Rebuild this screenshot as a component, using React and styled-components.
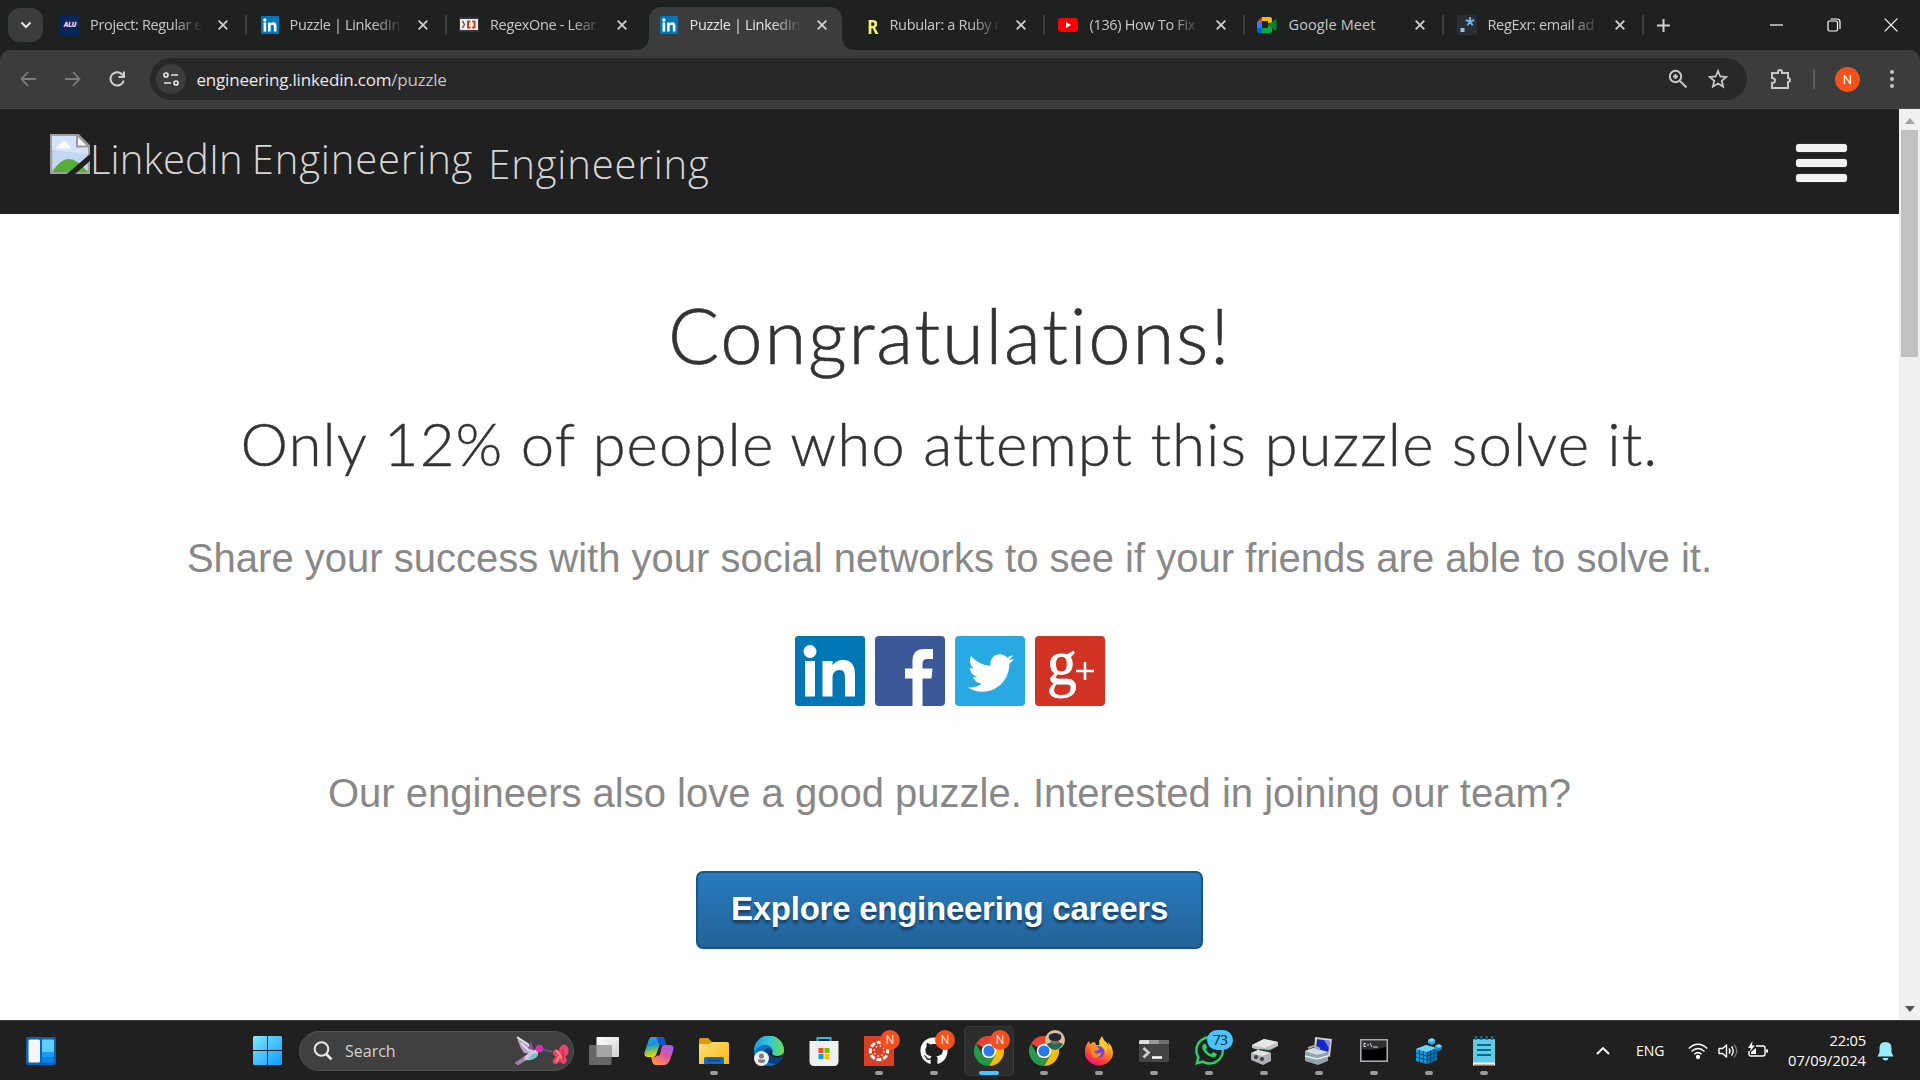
import React from "react";
import styled, { createGlobalStyle, css } from "styled-components";
import { FaTwitter, FaGithub, FaWhatsapp } from "react-icons/fa";

const ui = `"Open Sans", "Noto Sans", sans-serif`;

const Global = createGlobalStyle`
  * { box-sizing: border-box; }
  body { margin: 0; background: #fff; overflow: hidden; }
  svg { display: block; flex: none; }
`;

const Screen = styled.div`
  width: 1920px;
  height: 1080px;
  display: flex;
  flex-direction: column;
  overflow: hidden;
  font-family: ${ui};
`;

/* ---------- tab strip ---------- */
const TabStrip = styled.div`
  height: 50px;
  flex: none;
  display: flex;
  background: #1f2120;
  color: #c7c7c7;
`;
const TabSearch = styled.div`
  width: 35px;
  height: 34px;
  margin: 8px 7px 0 8px;
  border-radius: 12px;
  background: #3c3c3c;
  display: grid;
  place-items: center;
`;
const Tab = styled.div`
  position: relative;
  width: 199.5px;
  height: 43px;
  margin-top: 7px;
  padding: 0 0 7px 10px;
  display: flex;
  align-items: center;
  flex: none;
  ${(p) =>
    p.$active &&
    css`
      color: #e3e3e3;
      &::before {
        content: "";
        position: absolute;
        inset: 0 6px 0 0;
        border-radius: 12px 12px 0 0;
        background: #3c3c3c;
      }
    `}
`;
const Foot = styled.svg`
  position: absolute;
  bottom: 0;
  ${(p) => (p.$right ? "right: -8px; transform: scaleX(-1);" : "left: -14px;")}
`;
const Favicon = styled.div`
  position: relative;
  width: 20px;
  height: 20px;
  display: grid;
  place-items: center;
  margin-right: 10px;
`;
const AluMark = styled.div`
  width: 20px;
  height: 20px;
  display: grid;
  place-items: center;
  font: italic 900 7px/20px Roboto, sans-serif;
  background: #03265e;
  color: #f3d8e2;
  text-shadow: 0 -1px 0 #d7263d;
`;
const RubyMark = styled.div`
  font: 700 20px/20px "Noto Sans", sans-serif;
  transform: scaleX(0.85);
  color: #f5f07a;
  padding: 2px 0 0 9px;
`;
const TabTitle = styled.div`
  position: relative;
  width: 113px;
  font-size: 14.5px;
  line-height: 20px;
  padding-left: ${(p) => p.$indent || 0}px;
  letter-spacing: ${(p) => (p.$full ? 0.1 : -0.33)}px;
  white-space: nowrap;
  overflow: hidden;
  mask-image: ${(p) => (p.$full ? "none" : "linear-gradient(90deg, #000 74%, transparent 100%)")};
`;
const TabClose = styled.div`
  position: relative;
  width: 20px;
  margin-left: 10px;
  display: grid;
  place-items: center;
`;
const TabRule = styled.div`
  width: 2px;
  height: 20px;
  margin-left: 12px;
  background: ${(p) => (p.$hidden ? "transparent" : "#3e403f")};
`;
const NewTab = styled.div`
  width: 28px;
  margin: 7px 0 7px 3px;
  display: grid;
  place-items: center;
`;
const WindowButtons = styled.div`
  margin-left: auto;
  width: 172px;
  height: 49px;
  display: grid;
  grid-template-columns: repeat(3, 57px);
  place-items: center;
`;

/* ---------- toolbar ---------- */
const ToolbarBack = styled.div`
  height: 59px;
  flex: none;
  background: #1f2120;
`;
const Toolbar = styled.div`
  height: 59px;
  padding: 8px 21px 8px 14px;
  display: flex;
  align-items: center;
  background: #3c3c3c;
  border-radius: 10px 10px 0 0;
  border-bottom: 1px solid #494949;
`;
const NavIcon = styled.div`
  width: 28px;
  margin-right: 16.5px;
  display: grid;
  place-items: center;
`;
const Address = styled.div`
  width: 1597px;
  height: 42px;
  margin-left: 2.5px;
  padding: 0 19px 0 6px;
  border-radius: 21px;
  background: #282828;
  display: flex;
  align-items: center;
`;
const SiteInfo = styled.div`
  width: 30px;
  height: 30px;
  border-radius: 50%;
  background: #3c3c3c;
  display: grid;
  place-items: center;
`;
const Url = styled.div`
  margin: 1px auto 0 10.5px;
  font-size: 17px;
  line-height: 24px;
  letter-spacing: -0.2px;
  color: #e9e9e9;
  span { color: #c4c4c4; }
`;
const AddressIcons = styled.div`
  display: flex;
  gap: 20px;
`;
const ToolbarEnd = styled.div`
  margin-left: auto;
  display: flex;
  align-items: center;
`;
const ToolRule = styled.div`
  width: 2px;
  height: 20px;
  margin: 0 20px 0 21px;
  background: #5c5c5c;
`;
const Avatar = styled.div`
  width: 25px;
  height: 25px;
  border-radius: 50%;
  background: #f4511e;
  color: #fff;
  font: 400 13px/25px Roboto, sans-serif;
  text-align: center;
  margin-right: 25px;
`;

/* ---------- page ---------- */
const Viewport = styled.div`
  height: 911px;
  flex: none;
  display: flex;
`;
const Page = styled.main`
  width: 1899px;
  background: #fff;
`;
const SiteHeader = styled.header`
  height: 105px;
  padding: 0 52px 0 50px;
  background: #202020;
  display: flex;
  align-items: center;
  justify-content: space-between;
`;
const Brand = styled.div`
  display: flex;
  align-items: flex-start;
  padding-top: 4px;
  font: 300 40px/60px "Open Sans", sans-serif;
  letter-spacing: 0.85px;
  color: #d6d6d6;
  white-space: nowrap;
`;
const BrandAlt = styled.div`
  display: flex;
  margin-top: -5px;
  svg { margin-top: 5px; }
`;
const BrandWord = styled.span`
  margin-right: 9px;
  letter-spacing: 0.1px;
`;
const BrandName = styled.div`
  margin-left: 15px;
`;
const Burger = styled.div`
  width: 51px;
  margin-top: 2px;
  display: grid;
  gap: 7px;
  span {
    height: 8px;
    border-radius: 3px;
    background: #f2f2f2;
    box-shadow: 0 0 1px #aaa;
  }
`;
const Center = styled.section`
  display: flex;
  flex-direction: column;
  align-items: center;
  text-align: center;
  white-space: nowrap;
`;
const Title = styled.h1`
  margin: 73px 0 0;
  font: 300 76px/96px Lato, sans-serif;
  letter-spacing: 1.7px;
  color: #333;
  -webkit-text-stroke: 0.6px #333;
`;
const Subtitle = styled.h2`
  margin: 20px 0 0;
  font: 300 60px/80px Lato, sans-serif;
  letter-spacing: 1.05px;
  color: #333;
  -webkit-text-stroke: 0.4px #333;
`;
const Copy = styled.p`
  margin: ${(p) => p.$top}px 0 0;
  font: 40px/52px "Liberation Sans", Arial, sans-serif;
  color: #888;
`;
const Shares = styled.div`
  margin-top: 52px;
  display: flex;
  gap: 10px;
`;
const Share = styled.div`
  width: 70px;
  height: 70px;
  border-radius: 4px;
  display: flex;
  align-items: center;
  justify-content: center;
  background: ${(p) => p.$bg};
  color: #fff;
`;
const GPlus = styled.div`
  font: 64px/64px "Liberation Serif", serif;
  -webkit-text-stroke: 0.8px #fff;
  transform: scaleX(0.93);
  margin: -17px -2px 0 0;
  display: flex;
`;
const Bird = styled.div`
  margin: 3px 0 0 3px;
`;
const CareerButton = styled.button`
  width: 507px;
  height: 78px;
  margin: 52px 0 0;
  padding: 0 0 3px;
  border: 2px solid #1b5586;
  border-radius: 7px;
  background: linear-gradient(#287bbc, #23639a);
  color: #fff;
  font: bold 33px/70px "Liberation Sans", Arial, sans-serif;
  letter-spacing: -0.25px;
  text-shadow: 0 3px 3px rgba(0, 0, 0, 0.45);
`;
const ScrollTrack = styled.div`
  width: 21px;
  background: #f0f0f0;
  display: flex;
  flex-direction: column;
  align-items: center;
  justify-content: space-between;
  padding: 9px 0 8px;
`;
const Thumb = styled.div`
  width: 17px;
  height: 227px;
  margin: 6px 0 auto;
  background: #c1c1c1;
`;

/* ---------- taskbar ---------- */
const Taskbar = styled.footer`
  height: 60px;
  flex: none;
  display: flex;
  align-items: center;
  background: #202020;
  border-top: 1px solid #3c3c3c;
  color: #fff;
`;
const Widgets = styled.div`
  width: 253px;
  padding-left: 26px;
`;
const SearchBox = styled.div`
  width: 275px;
  height: 40px;
  margin: 0 5px 0 17px;
  padding: 0 3px 0 13px;
  border: 1px solid #525252;
  border-radius: 20px;
  background: #404040;
  display: flex;
  align-items: center;
  font-size: 16px;
  color: #d2d2d2;
  span { margin: 0 auto 0 12px; }
`;
const TaskButton = styled.div`
  position: relative;
  width: 50px;
  height: 50px;
  margin-right: 5px;
  border-radius: 5px;
  display: grid;
  place-items: center;
  flex: none;
  background: ${(p) => (p.$active ? "#2d2d2d" : "transparent")};
  box-shadow: ${(p) => (p.$active ? "inset 0 0 0 1px #383838" : "none")};
`;
const Running = styled.div`
  position: absolute;
  bottom: 1px;
  left: 50%;
  transform: translateX(-50%);
  width: ${(p) => (p.$active ? 20 : 8)}px;
  height: 4px;
  border-radius: 2px;
  background: ${(p) => (p.$active ? "#4cc2ff" : "#9a9a9a")};
`;
const Badge = styled.div`
  position: absolute;
  top: 4px;
  right: ${(p) => (p.$count ? 1 : 4)}px;
  width: ${(p) => (p.$count ? 26 : 20)}px;
  height: 20px;
  border-radius: 10px;
  background: ${(p) => (p.$count ? "#4cc2ff" : "#f1501f")};
  color: ${(p) => (p.$count ? "#10222c" : "#ffd9cc")};
  font: ${(p) => (p.$count ? `14px/20px ${ui}` : "12px/20px Roboto, sans-serif")};
  letter-spacing: ${(p) => (p.$count ? -0.8 : 0)}px;
  text-align: center;
`;
const PhotoBadge = styled.div`
  position: absolute;
  top: 4px;
  right: 4px;
`;
const Tray = styled.div`
  margin-left: auto;
  padding-right: 26px;
  display: flex;
  align-items: center;
`;
const Lang = styled.div`
  margin: 0 23px 0 26px;
  width: 29px;
  font-size: 14px;
  white-space: nowrap;
`;
const TrayIcons = styled.div`
  display: flex;
  gap: 10px;
`;
const Clock = styled.div`
  margin: -2px 11px 0 20px;
  width: 78px;
  display: flex;
  flex-direction: column;
  align-items: flex-end;
  font-size: 14.7px;
  line-height: 20px;
  white-space: nowrap;
  span:first-child { letter-spacing: -0.2px; }
`;

/* ---------- icons ---------- */
const LinkedInMark = ({ size, r = 1 }) => (
  <svg width={size} height={size} viewBox="0 0 70 70">
    <rect width="70" height="70" rx={r} fill="#0077b5" />
    <circle cx="15" cy="15.5" r="6.5" fill="#fff" />
    <rect x="10" y="25" width="10" height="35.5" fill="#fff" />
    <path d="M27.5 25H37.5V29.5C40 25.5 44 24 48 24C57 24 60 30 60 39V60.500H50V42C50 37 49 34 44.500 34C40 34 37.500 37 37.500 42V60.500H27.500Z" fill="#fff" />
  </svg>
);
const RegexOneIcon = () => (
  <svg width="20" height="20" viewBox="0 0 20 20">
    <rect y="2" width="20" height="15" fill="#2e3440" />
    <rect x="1" y="4" width="18" height="11" fill="#f4efe8" />
    <path d="M3.500 6L5.500 9.500L3.500 13" fill="none" stroke="#555" strokeWidth="1.400" />
    <path d="M11.300 6.500H9V12.500H11.300M13.200 6.500H15.500V12.500H13.200" fill="none" stroke="#c8401c" strokeWidth="2" />
  </svg>
);
const YoutubeIcon = () => (
  <svg width="20" height="20" viewBox="0 0 20 20">
    <rect y="3" width="20" height="14" rx="3.500" fill="#f00" />
    <path d="M8 7L13 10L8 13Z" fill="#fff" />
  </svg>
);
const MeetIcon = () => (
  <svg width="20" height="20" viewBox="0 0 20 20">
    <path d="M5 2H13Q15 2 15 4V8H11V6H5Z" fill="#ffba00" />
    <path d="M0 7L5 2V7Z" fill="#ea4335" />
    <path d="M0 7H5V13H0Z" fill="#2684fc" />
    <path d="M0 13H5V18H2Q0 18 0 16Z" fill="#0066da" />
    <path d="M5 13H11V10L15 9V16Q15 18 13 18H5Z" fill="#00ac47" />
    <path d="M11 10L18 4.500Q19.500 4 19.500 5V15Q19.500 16 18 15.500Z" fill="#00832d" />
  </svg>
);
const RegExrIcon = () => (
  <svg width="20" height="20" viewBox="0 0 20 20">
    <rect width="20" height="20" fill="#2a2e33" />
    <rect x="3.500" y="13" width="4" height="4" fill="#7cc4f5" />
    <path d="M13 6.500V2M13 6.500L17.300 5.200M13 6.500L15.600 10.200M13 6.500L10.400 10.200M13 6.500L8.700 5.200" stroke="#70b7e8" strokeWidth="1.900" fill="none" />
  </svg>
);
const Stroke = ({ w, h = w, d, c = "#c7c7c7", sw = 1.8, children, ...rest }) => (
  <svg width={w} height={h} viewBox={`0 0 ${w} ${h}`} fill="none" stroke={c} strokeWidth={sw} {...rest}>
    {d && <path d={d} />}
    {children}
  </svg>
);
const BrokenImage = () => (
  <svg width="40" height="40" viewBox="0 0 40 40">
    <path d="M1 1H28L39 12V39H1Z" fill="#c3d6f5" stroke="#a0a0a0" strokeWidth="2.500" />
    <path d="M2 2H27V12H38V20L2 16Z" fill="#d5e3fa" />
    <path d="M27 1V12.500H39Z" fill="#f7f7f7" stroke="#999" strokeWidth="2" />
    <path d="M6 14.500Q7 11 10 11Q12 6 15 7.500Q18 8 18 11Q21 12 20 14.500Z" fill="#fff" />
    <path d="M2 38Q10 25 19 25Q27 25 38 38Z" fill="#58ad36" />
    <path d="M17 40L40 20V27L25 40Z" fill="#202020" />
  </svg>
);
const Chrome = () => (
  <svg width="30" height="30" viewBox="0 0 30 30">
    <path d="M15 15L2 7.500A15 15 0 0 1 28 7.500Z" fill="#ea4335" />
    <path d="M15 7.500H28A15 15 0 0 1 15 30L21.500 18.700Z" fill="#fbbc04" />
    <path d="M2 7.500L8.500 18.700Q11 22.500 15 22.500L21.500 18.700L15 30A15 15 0 0 1 2 7.500Z" fill="#279847" />
    <circle cx="15" cy="15" r="7.300" fill="#fff" />
    <circle cx="15" cy="15" r="5.600" fill="#2878eb" />
  </svg>
);
const icons = {
  view: (
    <svg width="30" height="30" viewBox="0 0 30 30">
      <defs><linearGradient id="tv" x2="1" y2="1"><stop stopColor="#fff" /><stop offset="1" stopColor="#d2d2d2" /></linearGradient></defs>
      <rect x="7.500" y="1" width="22.500" height="20" rx="1" fill="url(#tv)" />
      <rect y="9" width="22.500" height="20" rx="1" fill="#666" />
      <rect x="7.500" y="9" width="15" height="12" fill="#a6a6a6" />
    </svg>
  ),
  copilot: (
    <svg width="30" height="28" viewBox="0 0 30 28">
      <defs>
        <linearGradient id="ca" x2=".2" y2="1"><stop stopColor="#20b3e8" /><stop offset=".4" stopColor="#168fdb" /><stop offset=".7" stopColor="#6cc260" /><stop offset="1" stopColor="#f5d800" /></linearGradient>
        <linearGradient id="cb" x1=".8" x2=".2" y2="1"><stop stopColor="#9d5cf4" /><stop offset=".45" stopColor="#e254a1" /><stop offset="1" stopColor="#ff9a4a" /></linearGradient>
      </defs>
      <path d="M8 0H18Q20 0 21 4L22 8H17Q15.500 8 15 10L12 18Q11 20 9 20H4Q-1 20 1 14L4 5Q5.500 0 8 0Z" fill="url(#ca)" />
      <path d="M14 0H18Q20 0 21 4L22 8H17Q15.500 8 15 10Q15 3 12 1Z" fill="#1c3fc4" opacity=".8" />
      <path d="M21 8H26Q31 8 29 14L26 23Q24 28 20 28H12Q9 28 8 24L7 20H10Q13 20 14 17L17 10Q18 8 21 8Z" fill="url(#cb)" />
      <path d="M15.500 9H18L15.500 18.500H12.500Z" fill="#222" />
    </svg>
  ),
  folder: (
    <svg width="30" height="28" viewBox="0 0 30 28">
      <defs><linearGradient id="fo" x2="1" y2="1"><stop stopColor="#ffe07a" /><stop offset="1" stopColor="#fdb813" /></linearGradient></defs>
      <path d="M0 3Q0 1 2 1H9L13 5H18V14H0Z" fill="#dc9a05" />
      <path d="M0 7H10L13 5H28Q30 5 30 7V27H0Z" fill="url(#fo)" />
      <path d="M5 27V22Q5 20 7 20H23Q25 20 25 22V27Z" fill="#0f6cbd" />
      <path d="M9 23.500H21" stroke="#0a4a88" strokeWidth="1.500" />
    </svg>
  ),
  edge: (
    <svg width="30" height="30" viewBox="0 0 30 30">
      <defs><linearGradient id="ed"><stop stopColor="#1f9be0" /><stop offset=".5" stopColor="#33c6d8" /><stop offset="1" stopColor="#6bdd4a" /></linearGradient></defs>
      <circle cx="15" cy="15" r="15" fill="#0d73c4" />
      <path d="M0 15A15 15 0 0 1 30 14Q30 20 23 20Q18 20 18 17Q20 14 17 11Q10 5 0 15Z" fill="url(#ed)" />
      <path d="M10 16Q8 27 22 28Q27 26 29 21Q21 25 16 19Q15 15 18 14Q12 9 10 16Z" fill="#0c3f7d" />
      <path d="M18 17Q18 20 23 20Q28 20 30 17L28.500 21Q20 24 16 19Q15 15 18 14Q19 15 18 17Z" fill="#222" />
      <circle cx="7.500" cy="22.500" r="7.500" fill="#eee" />
      <circle cx="7.500" cy="20" r="2.600" fill="#808080" />
      <path d="M4 23.500H11V24.500Q11 27 7.500 27Q4 27 4 24.500Z" fill="#808080" />
    </svg>
  ),
  store: (
    <svg width="30" height="30" viewBox="0 0 30 30">
      <path d="M8.500 7V2H21.500V7" fill="none" stroke="#28b8ea" strokeWidth="2" />
      <path d="M.5 5H29.500V25Q29.500 30 25 30H5Q.5 30 .5 25Z" fill="#f0f0f0" />
      <rect x="9.500" y="12" width="5" height="5" fill="#f25022" /><rect x="15.500" y="12" width="5" height="5" fill="#7fba00" />
      <rect x="9.500" y="18" width="5" height="5" fill="#00a4ef" /><rect x="15.500" y="18" width="5" height="5" fill="#ffb900" />
    </svg>
  ),
  canvas: (
    <svg width="30" height="30" viewBox="0 0 30 30">
      <rect width="30" height="30" fill="#d64027" />
      <circle cx="15" cy="15" r="8.700" fill="none" stroke="#fff" strokeWidth="3" strokeDasharray="5 1.833" strokeDashoffset="2.500" />
      <circle cx="15" cy="15" r="5" fill="none" stroke="#fff" strokeWidth="1.400" strokeDasharray="1.400 2.527" />
    </svg>
  ),
  github: <FaGithub size={28} color="#fff" />,
  chrome: <Chrome />,
  firefox: (
    <svg width="30" height="30" viewBox="0 0 30 30">
      <defs><linearGradient id="ff" x1=".8" x2=".3" y2="1"><stop stopColor="#fff04a" /><stop offset=".4" stopColor="#ff9a22" /><stop offset=".75" stopColor="#ff3d3d" /><stop offset="1" stopColor="#e0157e" /></linearGradient></defs>
      <path d="M1 16Q1 9 5 5L6 8Q8 6 11 6L12 9H16L15 5L18 0Q19 4 23 7L25 10L24 6Q29 11 29 17A14 13 0 0 1 1 16Z" fill="url(#ff)" />
      <circle cx="14.500" cy="16" r="6" fill="#7445e5" />
      <path d="M7 10Q12 9 15 12Q15 15 10 15L12 18Q15 18 17 16Q17 22 10 22Q5 18 7 10Z" fill="#ff8c20" />
      <path d="M16 5Q25 8 22 17Q20 10 15 10Z" fill="#ffca2b" />
    </svg>
  ),
  terminal: (
    <svg width="30" height="22" viewBox="0 0 30 22">
      <rect width="30" height="22" rx="1.500" fill="#444" />
      <path d="M0 4V1.500Q0 0 1.500 0H10V4Z" fill="#ddd" /><path d="M10 0H20V4H10Z" fill="#9a9a9a" /><path d="M20 0H30V4H20Z" fill="#707070" />
      <path d="M4.500 8L9.500 12.500L4.500 17.500" fill="none" stroke="#ccc" strokeWidth="2.800" /><path d="M13 17.500H23" stroke="#fff" strokeWidth="2.500" />
    </svg>
  ),
  whatsapp: <FaWhatsapp size={33} color="#25d366" />,
  drive: (
    <svg width="28" height="28" viewBox="0 0 28 28">
      <path d="M2 8L14 2L28 5V9L16 15L2 11Z" fill="#bfc1c2" /><path d="M2 8L14 2L28 5L15 11Z" fill="#e7e7e7" />
      <path d="M9 12L21 13L20 15L9 14Z" fill="#234c2c" />
      <path d="M1 16L8 13L21 16V24L13 28L1 23Z" fill="#aeb0b3" /><path d="M1 16L8 13L21 16L12 19Z" fill="#e2e2e2" />
      <circle cx="6" cy="20" r="2" fill="#3c3c3c" /><circle cx="12" cy="22" r="2" fill="#3c3c3c" />
    </svg>
  ),
  computer: (
    <svg width="30" height="30" viewBox="0 0 30 30">
      <path d="M11 1L28 3L26 21L10 16Z" fill="#d1cfc2" /><path d="M13 3L26 5L24 18L12 14Z" fill="#1528c9" /><path d="M20 4L26 5L25 12Z" fill="#7d91f5" />
      <path d="M4 12L10 10L16 13" fill="none" stroke="#aaa" strokeWidth="2" />
      <path d="M1 15L9 12L24 16V25L14 29L1 25Z" fill="#91a3ad" /><path d="M1 15L9 12L24 16L13 19Z" fill="#d3dce1" /><path d="M1 20L13 23L24 20" fill="none" stroke="#e5ebee" strokeWidth="1.500" />
    </svg>
  ),
  cmd: (
    <svg width="28" height="23" viewBox="0 0 28 23">
      <rect x=".8" y=".8" width="26.400" height="21.400" fill="#000" stroke="#a8a8b0" strokeWidth="1.600" />
      <path d="M2 10Q14 12 26 8V2H2Z" fill="#303030" /><path d="M6 4.500H4V7.500H6M8 5V7M10 4L12 8M13 8H18" fill="none" stroke="#ddd" strokeWidth="1" />
    </svg>
  ),
  registry: (
    <svg width="28" height="28" viewBox="0 0 28 28">
      <path d="M1 12L11 8L22 11V23L12 27L1 24Z" fill="#189bd7" /><path d="M1 12L11 8L22 11L12 15Z" fill="#6bd4f7" /><path d="M12 15L22 11V23L12 27Z" fill="#0d75b5" />
      <path d="M4.600 13V25M8.300 14V26M12 15V27M15.500 13.500V25.500M19 12V24M1 16L12 19L22 15M1 20L12 23L22 19" stroke="#083f70" strokeWidth=".9" fill="none" />
      <path d="M13 3L17 1L20 3V6L17 8L13 6Z" fill="#28aee4" /><path d="M20 9L24 7L27 9V12L24 14L20 13Z" fill="#1589c5" /><path d="M13 3L17 1L20 3L16 5ZM20 9L24 7L27 9L24 11Z" fill="#77d9fa" />
    </svg>
  ),
  notepad: (
    <svg width="22" height="30" viewBox="0 0 22 30">
      <rect y="3" width="22" height="26.500" rx="1" fill="#61cbe6" /><path d="M0 26.500H22V29Q22 30 20 30H2Q0 30 0 29Z" fill="#f5f5f5" /><path d="M1 29.300H21" stroke="#b5651d" strokeWidth="1.400" />
      <path d="M3 0V4M8.300 0V4M13.600 0V4M19 0V4" stroke="#126f92" strokeWidth="2.200" /><path d="M4 9H18M4 14H18M4 19H18" stroke="#0a6b8c" strokeWidth="1.800" />
    </svg>
  ),
};
const GradPhoto = () => (
  <svg width="20" height="20" viewBox="0 0 20 20">
    <circle cx="10" cy="10" r="10" fill="#d6bf94" />
    <path d="M2 14Q10 9 18 14Q15 19 10 20Q4 19 2 14Z" fill="#1e6b56" />
    <ellipse cx="10" cy="11" rx="4" ry="3.500" fill="#8a6a4e" />
    <path d="M4 5Q10 1 16 5Q17 8 15 10Q10 12 5 10Q3 8 4 5Z" fill="#24263a" />
  </svg>
);
const Hummingbird = () => (
  <svg width="56" height="30" viewBox="0 0 56 30">
    <path d="M3 1L17 10L20 18L10 17Q5 10 3 1Z" fill="#b9a2c8" /><path d="M3 1L14 8L18 16M7 7L15 15" stroke="#eee2f2" strokeWidth="1.500" fill="none" />
    <path d="M14 12L17 5L20 15Z" fill="#79608e" />
    <path d="M24 13Q17 14 11 20L1 27L4 29L12 24Q20 25 24 19Z" fill="#d5c4dc" /><path d="M14 23Q22 25 24 17L19 18Z" fill="#66c9c3" /><path d="M1 27L11 20L10 25L4 29Z" fill="#9a7cae" />
    <circle cx="25.500" cy="12.500" r="3.800" fill="#e32dab" /><path d="M28 13.500L38 15.500" stroke="#5961ad" strokeWidth="1.300" />
    <path d="M39 15Q42 12 45 15Q45 9 51 8.500Q56 11 54 18Q53 20 51 20Q55 26 50 28Q47 28 46 25Q43 30 39 27Q38 23 42 21Q38 18 39 15Z" fill="#f0426d" />
    <path d="M42 14L46 19L48 23M46 19L42 26" stroke="#ff9b7a" strokeWidth="1.500" fill="none" /><path d="M49 13L49 24" stroke="#c31d4d" />
  </svg>
);

const CloseX = ({ s = 10, sw = 1.8, c = "#d0d0d0" }) => (
  <Stroke w={s} c={c} sw={sw} d={`M.7 .7L${s - 0.7} ${s - 0.7}M${s - 0.7} .7L.7 ${s - 0.7}`} />
);

const tabs = [
  { title: "Project: Regular e", icon: <AluMark>ALU</AluMark> },
  { title: "Puzzle | LinkedIn", icon: <LinkedInMark size={18} r={4} /> },
  { title: "RegexOne - Lear", icon: <RegexOneIcon />, noRule: true, indent: 1 },
  { title: "Puzzle | LinkedIn", icon: <LinkedInMark size={18} r={4} />, active: true, indent: 1 },
  { title: "Rubular: a Ruby r", icon: <RubyMark>R</RubyMark>, indent: 1.5 },
  { title: "(136) How To Fix", icon: <YoutubeIcon />, indent: 2 },
  { title: "Google Meet", icon: <MeetIcon />, full: true, indent: 1.5 },
  { title: "RegExr: email ad", icon: <RegExrIcon />, indent: 1 },
];

const apps = [
  { icon: "view" },
  { icon: "copilot" },
  { icon: "folder", run: true },
  { icon: "edge" },
  { icon: "store" },
  { icon: "canvas", run: true, badge: "N" },
  { icon: "github", run: true, badge: "N" },
  { icon: "chrome", run: true, badge: "N", active: true },
  { icon: "chrome", run: true, photo: true },
  { icon: "firefox", run: true },
  { icon: "terminal", run: true },
  { icon: "whatsapp", run: true, badge: "73", count: true },
  { icon: "drive", run: true },
  { icon: "computer", run: true },
  { icon: "cmd", run: true },
  { icon: "registry", run: true },
  { icon: "notepad", run: true },
];

export default function App() {
  return (
    <Screen>
      <Global />
      <TabStrip>
        <TabSearch><Stroke w={12} h={8} c="#e3e3e3" sw={2} d="M1.500 1.500L6 6L10.500 1.500" /></TabSearch>
        {tabs.map((t, i) => (
          <Tab key={i} $active={t.active}>
            {t.active && [false, true].map((right) => (
              <Foot key={String(right)} $right={right} width="14" height="14" viewBox="0 0 14 14">
                <path d="M14 0V14H0Q14 14 14 0Z" fill="#3c3c3c" />
              </Foot>
            ))}
            <Favicon>{t.icon}</Favicon>
            <TabTitle $full={t.full} $indent={t.indent}>{t.title}</TabTitle>
            <TabClose><CloseX /></TabClose>
            <TabRule $hidden={t.active || t.noRule} />
          </Tab>
        ))}
        <NewTab><Stroke w={13} c="#d0d0d0" sw={2} d="M6.500 0V13M0 6.500H13" /></NewTab>
        <WindowButtons>
          <Stroke w={13} h={2} c="#fff" sw={1.2} d="M0 1H13" />
          <Stroke w={14} c="#fff" sw={1.2}><rect x="1" y="3" width="9.500" height="10" rx="1.500" /><path d="M3.500 1H10Q13 1 13 4V11" /></Stroke>
          <CloseX s={14} sw={1.2} c="#fff" />
        </WindowButtons>
      </TabStrip>
      <ToolbarBack>
        <Toolbar>
          <NavIcon><Stroke w={16} c="#7d7d7d" d="M8 1L1.500 8L8 15M1.500 8H16" /></NavIcon>
          <NavIcon><Stroke w={16} c="#7d7d7d" d="M8 1L14.500 8L8 15M14.500 8H0" /></NavIcon>
          <NavIcon><Stroke w={16} c="#d0d0d0" sw={2} d="M14 4.500A6.700 6.700 0 1 0 14.700 9.500M15 .5V6H9.500" /></NavIcon>
          <Address>
            <SiteInfo>
              <Stroke w={16} h={14} c="#e3e3e3" sw={1.7}><circle cx="3" cy="3" r="2" /><path d="M8 3H15M1 11H8" /><circle cx="13" cy="11" r="2" /></Stroke>
            </SiteInfo>
            <Url>engineering.linkedin.com<span>/puzzle</span></Url>
            <AddressIcons>
              <Stroke w={20} sw={2}><circle cx="7.500" cy="7.500" r="5.700" /><path d="M12 12L18.500 18.500M7.500 5V10M5 7.500H10" /></Stroke>
              <Stroke w={20} sw={1.8} d="M10 2L12.300 7.500L18.300 8L13.800 11.900L15.100 17.700L10 14.600L4.900 17.700L6.200 11.900L1.700 8L7.700 7.500Z" />
            </AddressIcons>
          </Address>
          <ToolbarEnd>
            <Stroke w={22} sw={2} d="M2 5H8V4A2 2 0 0 1 12 4V5H18V10A2 2 0 0 1 18 14V20H2V15Q5 15 5 12.500Q5 10 2 10Z" />
            <ToolRule />
            <Avatar>N</Avatar>
            <svg width="14" height="20" viewBox="0 0 14 20" fill="#c7c7c7"><circle cx="7" cy="3" r="2" /><circle cx="7" cy="10" r="2" /><circle cx="7" cy="17" r="2" /></svg>
          </ToolbarEnd>
        </Toolbar>
      </ToolbarBack>
      <Viewport>
        <Page>
          <SiteHeader>
            <Brand>
              <BrandAlt>
                <BrokenImage />
                <BrandWord>LinkedIn</BrandWord> Engineering
              </BrandAlt>
              <BrandName>Engineering</BrandName>
            </Brand>
            <Burger><span /><span /><span /></Burger>
          </SiteHeader>
          <Center>
            <Title>Congratulations!</Title>
            <Subtitle>Only 12% of people who attempt this puzzle solve it.</Subtitle>
            <Copy $top={49}>Share your success with your social networks to see if your friends are able to solve it.</Copy>
            <Shares>
              <Share $bg="#0077b5"><LinkedInMark size={70} r={4} /></Share>
              <Share $bg="#3b5998">
                <svg width="70" height="70" viewBox="0 0 70 70"><path d="M37.500 70V42.500H30V32.500H37.500V25Q37.500 13 49 13H58V23H52Q47.500 23 47.500 28V32.500H57.500L56.500 42.500H47.500V70Z" fill="#fff" /></svg>
              </Share>
              <Share $bg="#29a9e1"><Bird><FaTwitter size={46} /></Bird></Share>
              <Share $bg="#d03324">
                <GPlus>g</GPlus>
                <Stroke w={18} c="#fff" sw={2.6} d="M9 0V18M0 9H18" />
              </Share>
            </Shares>
            <Copy $top={61}>Our engineers also love a good puzzle. Interested in joining our team?</Copy>
            <CareerButton>Explore engineering careers</CareerButton>
          </Center>
        </Page>
        <ScrollTrack>
          <svg width="10" height="6" viewBox="0 0 10 6"><path d="M0 6L5 0L10 6Z" fill="#a3a3a3" /></svg>
          <Thumb />
          <svg width="10" height="6" viewBox="0 0 10 6"><path d="M0 0H10L5 6Z" fill="#505050" /></svg>
        </ScrollTrack>
      </Viewport>
      <Taskbar>
        <Widgets>
          <svg width="30" height="28" viewBox="0 0 30 28">
            <rect width="30" height="28" rx="2" fill="#0c63b5" /><rect x="2.500" y="2.500" width="11.500" height="23" rx="1.500" fill="#f7f7f7" />
            <rect x="16" y="2.500" width="12" height="12.500" rx="1" fill="#60cdff" /><rect x="16" y="15" width="12" height="5.500" fill="#1a9cf5" /><rect x="16" y="20.500" width="12" height="5" fill="#0a84ea" />
          </svg>
        </Widgets>
        <svg width="29" height="29" viewBox="0 0 29 29">
          <defs><linearGradient id="win" gradientUnits="userSpaceOnUse" x2="29" y2="29"><stop stopColor="#7fe9ff" /><stop offset="1" stopColor="#0d9bfb" /></linearGradient></defs>
          <path d="M1 0H14V14H0V1ZM15 0H28L29 1V14H15ZM0 15H14V29H1L0 28ZM15 15H29V28L28 29H15Z" fill="url(#win)" />
        </svg>
        <SearchBox>
          <Stroke w={20} c="#e8e8e8" sw={2}><circle cx="8.500" cy="8" r="6.800" /><path d="M13.300 13L18.500 18.500" strokeWidth="2.600" /></Stroke>
          <span>Search</span>
          <Hummingbird />
        </SearchBox>
        {apps.map((a, i) => (
          <TaskButton key={i} $active={a.active}>
            {icons[a.icon]}
            {a.badge && <Badge $count={a.count}>{a.badge}</Badge>}
            {a.photo && <PhotoBadge><GradPhoto /></PhotoBadge>}
            {a.run && <Running $active={a.active} />}
          </TaskButton>
        ))}
        <Tray>
          <Stroke w={14} h={9} c="#fff" sw={1.9} d="M1 8L7 2L13 8" />
          <Lang>ENG</Lang>
          <TrayIcons>
            <Stroke w={20} c="#fff" sw={1.5}>
              <path d="M.8 7.500Q10 -1 19.200 7.500M3.500 10.500Q10 4.500 16.500 10.500M6.300 13.300Q10 10 13.700 13.300" /><circle cx="10" cy="16" r="1.400" fill="#fff" />
            </Stroke>
            <Stroke w={20} c="#fff" sw={1.4}>
              <path d="M1 7.500H4.500L8.500 4V16L4.500 12.500H1ZM11 7.500Q13 10 11 12.500M13.500 5.500Q17 10 13.500 14.500" strokeLinejoin="round" /><path d="M16 3.500Q21.500 10 16 16.500" stroke="#777" />
            </Stroke>
            <Stroke w={20} c="#fff" sw={1.4}>
              <path d="M8 5H15Q17 5 17 7V13Q17 15 15 15H3Q1 15 1 13V10" /><path d="M19 8.500V11.500" strokeWidth="2" /><path d="M3 13V11L8 7V13Z" fill="#fff" stroke="none" /><path d="M4.500 0L0 7H3L1.500 11L7 4.500H4Z" fill="#fff" stroke="none" />
            </Stroke>
          </TrayIcons>
          <Clock><span>22:05</span><span>07/09/2024</span></Clock>
          <svg width="17" height="20" viewBox="0 0 17 20" fill="#99ebff"><path d="M2.500 7Q2.500 1 8.500 1Q14.500 1 14.500 7V11.500L16.500 15.500H.5L2.500 11.500Z" /><path d="M5.500 17H11.500Q11 19.500 8.500 19.500Q6 19.500 5.500 17Z" /></svg>
        </Tray>
      </Taskbar>
    </Screen>
  );
}
